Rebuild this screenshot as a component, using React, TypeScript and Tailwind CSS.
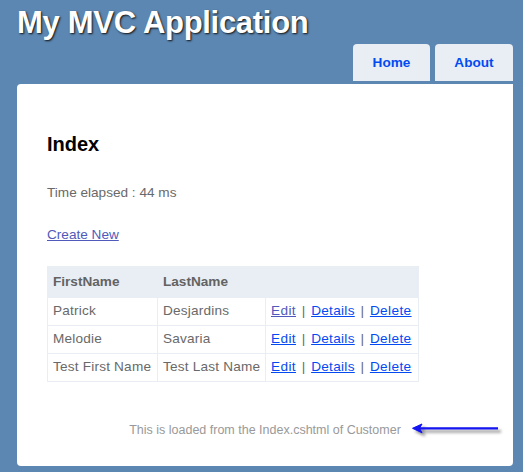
import React from "react";

const rows = [
  { f: "Patrick", l: "Desjardins", visited: true },
  { f: "Melodie", l: "Savaria", visited: false },
  { f: "Test First Name", l: "Test Last Name", visited: false },
];

function Sep() {
  return <span className="px-[2px]">{" | "}</span>;
}

export default function App() {
  return (
    <div className="relative w-[523px] h-[472px] overflow-hidden bg-[#5c87b2] font-['Liberation_Sans','Arial',sans-serif] text-[13.6px] text-[#696969]">
      {/* header */}
      <div className="relative h-[44px]">
        <h1 className="pl-[17px] pt-[7px] text-[31px] leading-[31px] font-bold tracking-[-0.3px] text-white [text-shadow:1px_1px_2px_#111]">
          My MVC Application
        </h1>
        <div className="absolute right-[20px] top-[-15px] leading-[16px] text-white whitespace-pre">
          [ <span className="underline">Log On</span> ]
        </div>
      </div>

      {/* menu */}
      <div className="flex justify-end gap-[5px] pr-[10px]">
        <div className="w-[77px] h-[37px] rounded-t-[4px] bg-[#e8eef4] text-center leading-[37px] font-bold text-[#034af3]">
          Home
        </div>
        <div className="w-[78px] h-[37px] rounded-t-[4px] bg-[#e8eef4] text-center leading-[37px] font-bold text-[#034af3]">
          About
        </div>
      </div>

      {/* main */}
      <div className="ml-[17px] mt-[3px] w-[496px] h-[382px] bg-white rounded-tl-[4px] rounded-b-[4px] px-[30px] pt-[48px]">
        <h2 className="text-[20px] leading-[24px] font-bold text-black">Index</h2>
        <p className="mt-[28px] leading-[18px]">Time elapsed : 44 ms</p>
        <p className="mt-[24px] leading-[18px]">
          <span className="underline text-[#505abc]">Create New</span>
        </p>

        <table className="mt-[22px] table-fixed w-[371px] border-collapse border border-[#e8eef4]">
          <thead>
            <tr>
              <th className="w-[110px] h-[31px] px-[5px] py-0 text-left font-bold bg-[#e8eef4] border border-[#e8eef4] text-[#636363]">
                FirstName
              </th>
              <th className="w-[108px] h-[31px] px-[5px] py-0 text-left font-bold bg-[#e8eef4] border border-[#e8eef4] text-[#636363]">
                LastName
              </th>
              <th className="w-[153px] h-[31px] px-[5px] py-0 bg-[#e8eef4] border border-[#e8eef4]"></th>
            </tr>
          </thead>
          <tbody>
            {rows.map((r, i) => (
              <tr key={i}>
                <td className="h-[28px] px-[5px] py-0 border border-[#e8eef4] whitespace-nowrap tracking-[0.2px]">{r.f}</td>
                <td className="h-[28px] px-[5px] py-0 border border-[#e8eef4] whitespace-nowrap tracking-[0.2px]">{r.l}</td>
                <td className="h-[28px] px-[5px] py-0 border border-[#e8eef4] whitespace-nowrap">
                  <span className={"underline tracking-[0.4px] " + (r.visited ? "text-[#505abc]" : "text-[#034af3]")}>Edit</span>
                  <Sep />
                  <span className="underline tracking-[0.3px] text-[#034af3]">Details</span>
                  <Sep />
                  <span className="underline tracking-[0.4px] text-[#034af3]">Delete</span>
                </td>
              </tr>
            ))}
          </tbody>
        </table>

        <p className="mt-[40px] text-center text-[12.5px] leading-[16px] text-[#999]">
          This is loaded from the Index.cshtml of Customer
        </p>
      </div>

      {/* annotation arrow */}
      <svg className="absolute left-[405px] top-[418px]" width="105" height="24" viewBox="0 0 105 24">
        <defs>
          <filter id="sh" x="-20%" y="-50%" width="140%" height="250%">
            <feDropShadow dx="3" dy="3" stdDeviation="1.6" floodColor="#000" floodOpacity="0.45" />
          </filter>
        </defs>
        <g filter="url(#sh)">
          <line x1="12" y1="10.3" x2="93" y2="10.3" stroke="#1212f0" strokeWidth="2.2" />
          <path d="M7.5 10.3 L17 6 L14.5 10.3 L17 14.8 Z" fill="#1212f0" stroke="#1212f0" strokeWidth="1" strokeLinejoin="round" />
        </g>
      </svg>
    </div>
  );
}
